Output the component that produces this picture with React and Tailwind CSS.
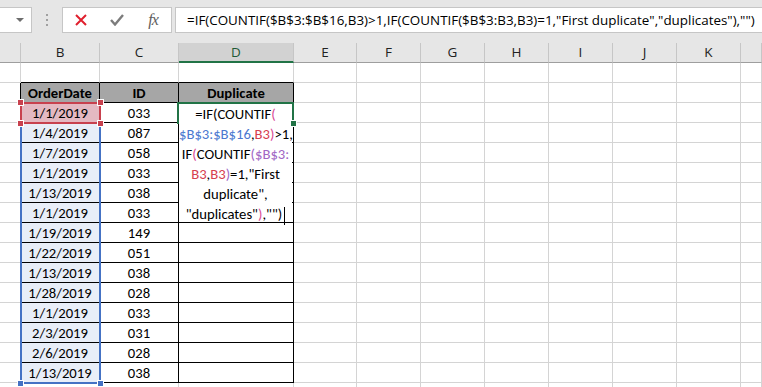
const COLS = [
  { k: 'A', w: 'w-[21px]' },
  { k: 'B', w: 'w-[79px]' },
  { k: 'C', w: 'w-[79px]' },
  { k: 'D', w: 'w-[115px]' },
  { k: 'E', w: 'w-[63px]' },
  { k: 'F', w: 'w-[64px]' },
  { k: 'G', w: 'w-[64px]' },
  { k: 'H', w: 'w-[64px]' },
  { k: 'I', w: 'w-[64px]' },
  { k: 'J', w: 'w-[64px]' },
  { k: 'K', w: 'w-[64px]' },
  { k: 'L', w: 'w-[21px]' },
];

const DATA = [
  ['1/1/2019', '033'],
  ['1/4/2019', '087'],
  ['1/7/2019', '058'],
  ['1/1/2019', '033'],
  ['1/13/2019', '038'],
  ['1/1/2019', '033'],
  ['1/19/2019', '149'],
  ['1/22/2019', '051'],
  ['1/13/2019', '038'],
  ['1/28/2019', '028'],
  ['1/1/2019', '033'],
  ['2/3/2019', '031'],
  ['2/6/2019', '028'],
  ['1/13/2019', '038'],
];

const FORMULA =
  '=IF(COUNTIF($B$3:$B$16,B3)>1,IF(COUNTIF($B$3:B3,B3)=1,"First duplicate","duplicates"),"")';

const TABLE_COLS = ['B', 'C', 'D'];

function cellText(col, row) {
  if (row === 2) {
    if (col === 'B') return 'OrderDate';
    if (col === 'C') return 'ID';
    if (col === 'D') return 'Duplicate';
  }
  if (row >= 3 && row <= 16) {
    if (col === 'B') return DATA[row - 3][0];
    if (col === 'C') return DATA[row - 3][1];
  }
  return '';
}

function Cell({ col, row }) {
  const inTable = row >= 2 && row <= 16 && TABLE_COLS.includes(col.k);
  const rightBlack = inTable || (col.k === 'A' && row >= 2 && row <= 16);
  const bottomBlack = inTable || (row === 1 && TABLE_COLS.includes(col.k));

  let bg = 'bg-white';
  if (row === 2 && inTable) bg = 'bg-[#a6a6a6]';
  else if (col.k === 'B' && row === 3) bg = 'bg-[#e4b9c2]';
  else if (col.k === 'B' && row > 3 && row <= 16) bg = 'bg-[#e8eef8]';

  return (
    <div
      className={`${col.w} h-[20px] shrink-0 border-r border-b ${
        rightBlack ? 'border-r-black' : 'border-r-[#d4d4d4]'
      } ${bottomBlack ? 'border-b-black' : 'border-b-[#d4d4d4]'} ${bg} flex items-center justify-center whitespace-nowrap overflow-visible text-black text-[14.67px] pt-px ${
        row === 2 ? 'font-bold' : ''
      }`}
    >
      {cellText(col.k, row)}
    </div>
  );
}

function Handle({ color, className }) {
  return (
    <div
      className={`absolute w-[7px] h-[7px] border border-white ${color} ${className}`}
    />
  );
}

const BLUE = 'text-[#4a78d0]';
const RED = 'text-[#d6404f]';
const PURPLE = 'text-[#a066c4]';
const PINK = 'text-[#d94a94]';

function EditBox() {
  return (
    <div className="absolute left-[179px] top-[104px] w-[113px] h-[118px] bg-white text-[14.67px] leading-[20px] text-black font-['Carlito','Lato',sans-serif]">
      <div className="text-center whitespace-nowrap">
        =IF(COUNTIF<span className={PINK}>(</span>
      </div>
      <div className="text-center whitespace-nowrap">
        <span className={BLUE}>$B$3:$B$16</span>,<span className={RED}>B3</span>
        <span className={PINK}>)</span>&gt;1,
      </div>
      <div className="text-center whitespace-nowrap">
        IF<span className={PINK}>(</span>COUNTIF<span className={PURPLE}>(</span>
        <span className={PURPLE}>$B$3:</span>
      </div>
      <div className="text-center whitespace-nowrap">
        <span className={RED}>B3</span>,<span className={RED}>B3</span>
        <span className={PURPLE}>)</span>=1,"First
      </div>
      <div className="text-center whitespace-nowrap">duplicate",</div>
      <div className="text-center whitespace-nowrap">
        "duplicates"<span className={PINK}>)</span>,"")
        <span className="inline-block w-px h-[18px] bg-black align-middle ml-[2px]" />
      </div>
    </div>
  );
}

function Toolbar() {
  return (
    <div className="h-[43px] bg-[#e6e6e6] flex items-start pt-[7px]">
      <div className="w-[32px] h-[26px] bg-white border border-l-0 border-[#c6c6c6] flex items-center justify-end pr-[7px]">
        <span className="w-0 h-0 border-l-[4px] border-r-[4px] border-t-[4px] border-l-transparent border-r-transparent border-t-[#6d6d6d]" />
      </div>
      <div className="w-[30px] flex flex-col items-center gap-[3px] pt-[7px]">
        <span className="w-[2px] h-[2px] bg-[#a0a0a0]" />
        <span className="w-[2px] h-[2px] bg-[#a0a0a0]" />
        <span className="w-[2px] h-[2px] bg-[#a0a0a0]" />
      </div>
      <div className="w-[110px] h-[26px] bg-white border border-[#c6c6c6] flex items-center">
        <div className="w-[36px] flex justify-center">
          <svg width="12" height="12" viewBox="0 0 12 12">
            <path d="M1 1 L11 11 M11 1 L1 11" stroke="#e0202e" strokeWidth="2" />
          </svg>
        </div>
        <div className="w-[36px] flex justify-center">
          <svg width="14" height="12" viewBox="0 0 14 12">
            <path d="M1 6 L5 10.5 L13 1" stroke="#7c7c7c" strokeWidth="2.4" fill="none" />
          </svg>
        </div>
        <div className="w-[36px] flex justify-center">
          <span className="font-['Liberation_Serif',serif] italic text-[16px] leading-none text-[#5e5e5e] tracking-[-1px]">
            fx
          </span>
        </div>
      </div>
      <div className="ml-[3px] flex-1 h-[26px] bg-white border border-r-0 border-[#c6c6c6] flex items-center pl-[11px] font-['Open_Sans',sans-serif] text-[13.4px] text-black whitespace-nowrap overflow-hidden">
        {FORMULA}
      </div>
    </div>
  );
}

function ColumnHeaders() {
  return (
    <div className="flex h-[20px] bg-[#e6e6e6] font-['Open_Sans',sans-serif] text-[13.5px]">
      {COLS.map((col) => {
        const active = col.k === 'D';
        return (
          <div
            key={col.k}
            className={`${col.w} shrink-0 border-r border-r-[#c6c6c6] flex items-center justify-center ${
              active
                ? 'bg-[#d2d2d2] border-b-2 border-b-[#217346] text-[#1e5a36]'
                : 'border-b border-b-[#9e9e9e] text-[#222]'
            }`}
          >
            {col.k === 'A' || col.k === 'L' ? '' : col.k}
          </div>
        );
      })}
    </div>
  );
}

export default function App() {
  const rows = Array.from({ length: 17 }, (_, i) => i + 1);
  return (
    <div className="relative w-[762px] h-[387px] overflow-hidden bg-white font-['Carlito','Lato',sans-serif]">
      <Toolbar />
      <ColumnHeaders />
      <div className="flex flex-col">
        {rows.map((row) => (
          <div key={row} className="flex">
            {COLS.map((col) => (
              <Cell key={col.k} col={col} row={row} />
            ))}
          </div>
        ))}
      </div>

      {/* reference highlight for $B$3:$B$16 */}
      <div className="absolute left-[20px] top-[102px] w-[81px] h-[282px] border-2 border-[#4472c4]" />
      <Handle color="bg-[#4472c4]" className="left-[17px] top-[380px]" />
      <Handle color="bg-[#4472c4]" className="left-[97px] top-[380px]" />

      {/* reference highlight for B3 */}
      <div className="absolute left-[20px] top-[102px] w-[81px] h-[22px] border-2 border-[#c8414e]" />
      <Handle color="bg-[#c8414e]" className="left-[17px] top-[99px]" />
      <Handle color="bg-[#c8414e]" className="left-[97px] top-[99px]" />
      <Handle color="bg-[#c8414e]" className="left-[17px] top-[120px]" />
      <Handle color="bg-[#c8414e]" className="left-[97px] top-[120px]" />

      <EditBox />

      {/* active cell D3 */}
      <div className="absolute left-[177px] top-[102px] w-[117px] h-[22px] border-2 border-b-0 border-[#217346]" />
      <Handle color="bg-[#217346]" className="left-[290px] top-[120px]" />
    </div>
  );
}
